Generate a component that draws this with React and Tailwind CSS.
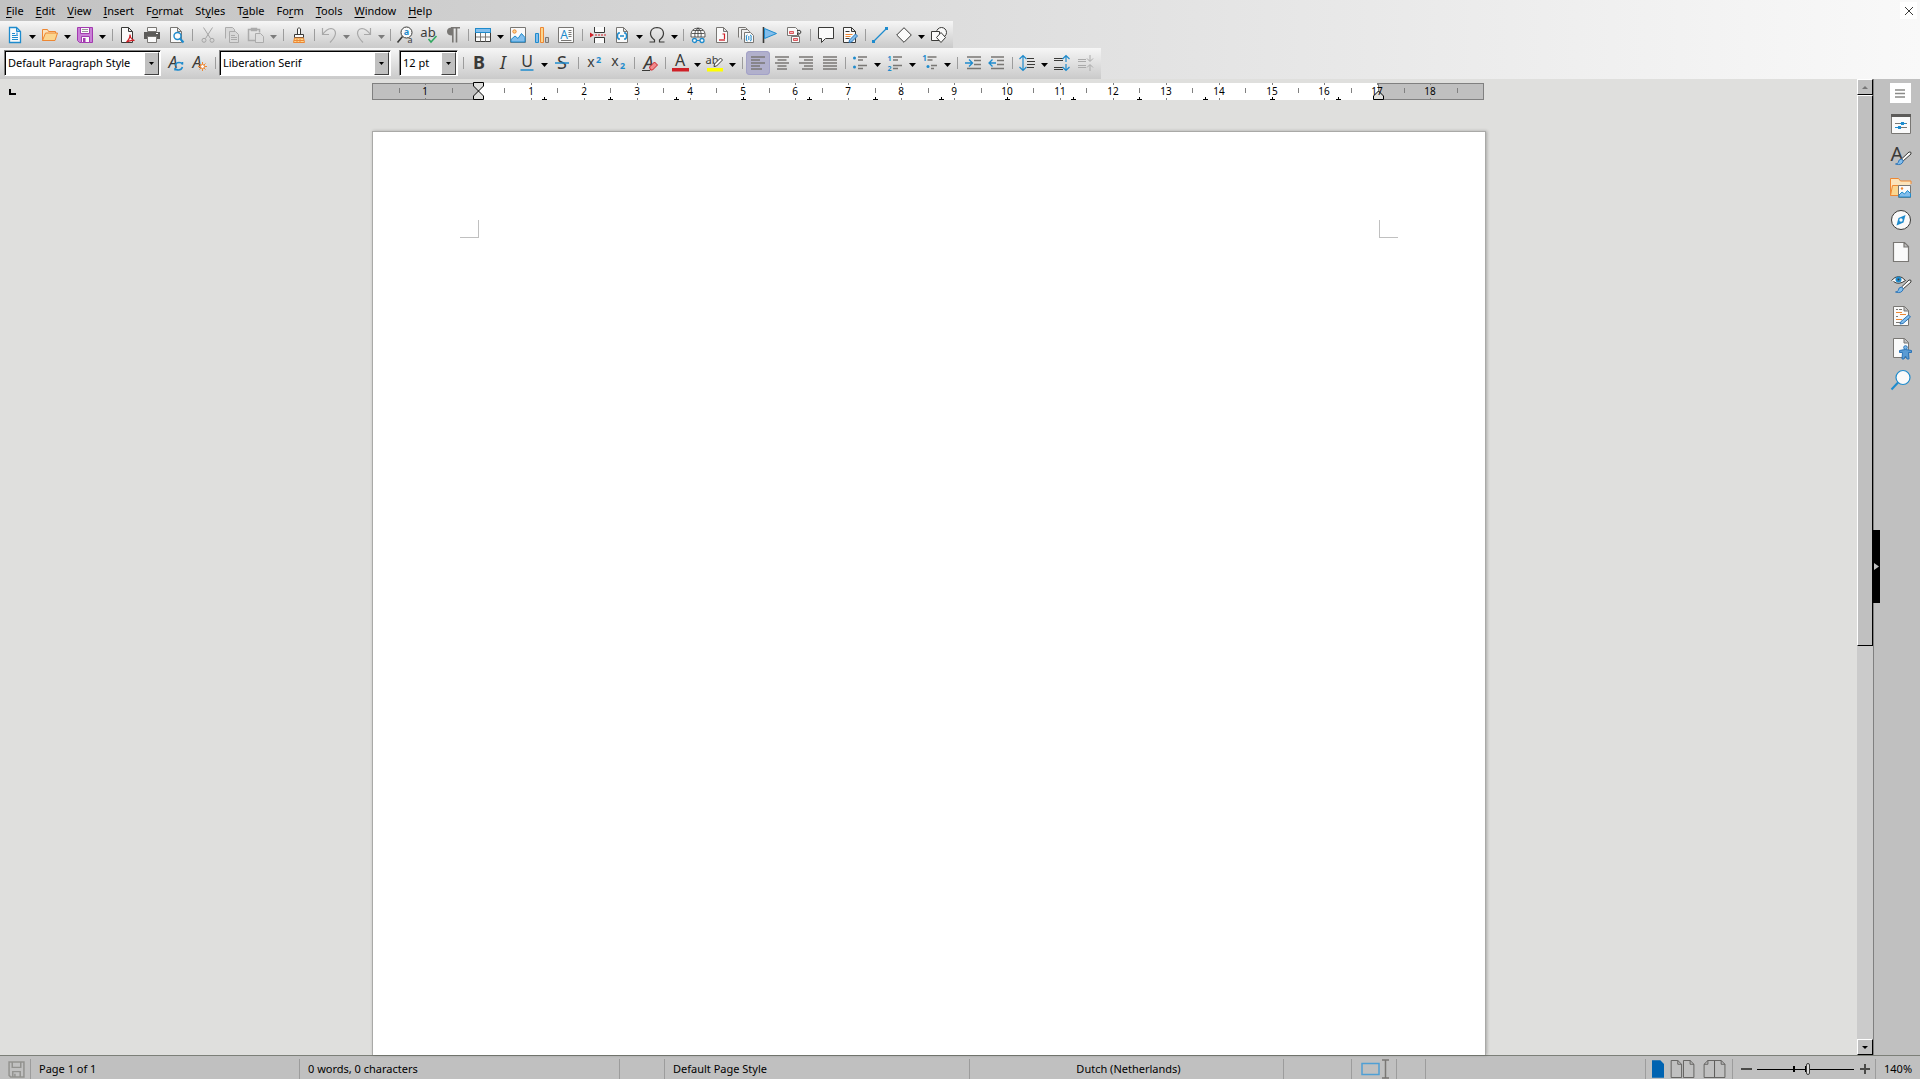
import React from 'react';

const K = '#3a3a38';
const G = '#797774';
const B = '#1e8bcd';
const L = '#83beec';
const O = '#ed8733';
const R = '#cf2027';
const W = '#fafafa';

const T = ({ x, y, s = 12, f = K, b, i, children }) => (
  <text x={x} y={y} fontSize={s} fill={f} stroke="none" fontWeight={b ? 700 : 400} fontStyle={i ? 'italic' : 'normal'} fontFamily="'Noto Sans', sans-serif" textAnchor="middle">
    {children}
  </text>
);

const page = (c = G, fill = W) => <path d="M2.5.5h7l4 4v11h-11z M9.5.5v4h4" fill={fill} stroke={c} />;
const brush = (
  <g>
    <path d="M19 7l-7.500 7 1.800 1.800L21 9q.6-2.600-2-2z" fill={W} stroke={K} />
    <path d="M11.500 14q-3 .2-3.200 3.500-1 1.500-2.800 1.500 6.500 2 7.800-3.200z" fill={L} stroke="#2b74b8" />
  </g>
);

const icons = {
  newdoc: <g><path d="M2.500.500h7l4 4v11h-11z" fill={W} stroke={B} strokeWidth="1.300" /><path d="M9.500.500v4h4z" fill={L} stroke={B} /><path d="M5 6.500h3M5 8.500h6M5 10.500h6M5 12.500h6" stroke={B} /><path d="M9 5.500h2v3h-2z" fill={L} /></g>,
  open: <g><path d="M.5 13.500v-11h5l1 2h7v2" fill="#fbe3ba" stroke={O} /><path d="M.5 13.500l3-7.500h12l-2.500 7.500z" fill="#fbd68f" stroke={O} /></g>,
  save: <g><path d="M.5.500h15v15h-13l-2-2z" fill="#c980d6" stroke="#a33ab0" /><path d="M3.500.500h9v6h-9z" fill={W} stroke="#a33ab0" /><path d="M5 2.500h6M5 4.500h6" stroke="#999" /><path d="M4.500 9.500h8v6h-8z" fill={W} stroke="#a33ab0" /><path d="M6 11h2.500v4h-2.500z" fill="#a33ab0" /></g>,
  pdf: <g><path d="M1.500.500h7l4 4v11h-11z M8.500.500v4h4" fill={W} stroke={K} /><path d="M6.500 15q3.500-3 3.500-7.500.500 5 4.500 6-4-.5-8 1.500z" fill="none" stroke={R} strokeWidth="1.200" /></g>,
  print: <g><path d="M3.500.500h9v4h-9z" fill={W} stroke={G} /><path d="M0 5h16v7h-16z" fill="#5c5b59" /><path d="M12 6.500h2" stroke="#fff" /><path d="M3.500 9.500h9v6h-9z" fill={W} stroke={G} /></g>,
  preview: <g>{page()}<circle cx="9.500" cy="9" r="3.500" fill={W} stroke={B} strokeWidth="1.400" /><path d="M12 11.500l3.500 4" stroke={B} strokeWidth="2" /></g>,
  cut: <g fill="none" stroke="#a5a5a5"><path d="M3.500.500l7 11M12.500.500l-7 11" /><circle cx="4" cy="13.300" r="2" /><circle cx="12" cy="13.300" r="2" /></g>,
  copy: <g fill="#d8d8d8" stroke="#ababab"><path d="M1.500 11.500v-11h7l2 2v2" /><path d="M5.500 4.500h6l3 3v8h-9z M7 8.500h4M7 10.500h6M7 12.500h6" /></g>,
  paste: <g fill="none" stroke="#ababab"><path d="M7 13.500h-6.500v-11h11v3M3.500 1.500h5v2h-5z" strokeWidth="1.500" /><path d="M7.500 6.500h5l3 3v6h-8z" fill="#ddd" /></g>,
  clone: <g><path d="M6.500 7v-5q1.500-3 3 0v5" fill={W} stroke={K} /><path d="M3.500 7.500h9v3h-9z" fill={W} stroke={K} /><path d="M3.500 11l-1 4.500h11l-1-4.500z" fill="#fbd68f" stroke={O} /><path d="M6 12v3M9 12v3M3 13.500h10" stroke={O} /></g>,
  undo: <g fill="none" stroke="#a8a8a8"><path d="M1.500 1v6.500h6.500M1.500 7.500q4-5.500 8.500-6 4.500.5 4.500 5-.5 4-5.500 9" strokeWidth="1.200" /></g>,
  redo: <g fill="none" stroke="#a8a8a8"><path d="M14.500 1v6.500h-6.500M14.500 7.500q-4-5.500-8.500-6-4.500.5-4.500 5 .5 4 5.500 9" strokeWidth="1.200" /></g>,
  find: <g><circle cx="9.500" cy="5.500" r="5.500" fill={W} stroke={K} /><path d="M5.500 9.500l-5 6" stroke={K} strokeWidth="1.600" /><T x="9.500" y="8" s="9" f={B} b>a</T><T x="13" y="16" s="9">a</T></g>,
  spell: <g><T x="7" y="9.500" s="13">ab</T><path d="M7.500 12l2.500 3 5.500-6" fill="none" stroke="#2fa860" strokeWidth="1.500" /></g>,
  pilcrow: <g><path d="M7 .5q-5 0-5 4t5 4z" fill={G} /><path d="M6 .8h9M7.800.500v15M11.500.500v15" stroke={G} strokeWidth="1.600" /></g>,
  table: <g><path d="M.5 1.500h15v13h-15z" fill={W} stroke={K} /><path d="M.5 1.500h15v4h-15z" fill={L} stroke={B} /><path d="M5.500 6v8.500M10.500 6v8.500M1 10h14" stroke={G} /></g>,
  image: <g><path d="M.5.500h15v15h-15z" fill={W} stroke={G} /><circle cx="4.500" cy="4.500" r="1.700" fill="#fbd68f" stroke={O} /><path d="M1 15v-2.500l4-3.500 3 2.500 3.500-5 3.500 4v4.500z" fill={L} stroke={B} /></g>,
  chart: <g><path d="M1.500 6.500h3v9h-3z" fill={L} stroke={B} /><path d="M6.500.500h3v15h-3z" fill="#fbd68f" stroke={O} /><path d="M11.500 10.500h3v5h-3z" fill="#c9c7c5" stroke={G} /></g>,
  textbox: <g><path d="M.5.500h15v15h-15z" fill={W} stroke={G} /><T x="6" y="12" s="12" f={B}>A</T><path d="M10.500 3.500h3M10.500 5.500h3M10.500 7.500h3M10.500 9.500h3M3 13.500h10.500" stroke={G} /></g>,
  pagebreak: <g><path d="M4.500 0v5.500h10v-5.500M4.500 16v-5.500h10v5.500" fill={W} stroke={K} /><path d="M0 5.500l4 2.500-4 2.500z" fill={R} /><path d="M5 8h11" stroke={R} strokeDasharray="2 1" /></g>,
  field: <g>{page()}<path d="M6 12h-1.500l-1-1.500v-3l1-1.500h1.500M10 6h1.500l1 1.500v3l-1 1.500h-1.500M6 9h4" fill="none" stroke={B} strokeWidth="1.500" /></g>,
  omega: <path d="M.5 15h5v-2q-4-3-4-6.500 0-5.500 6.500-6 6.500.5 6.500 6 0 3.500-4 6.500v2h5" fill="none" stroke={K} strokeWidth="1.200" />,
  link: <g fill="none"><path d="M1 10q-1-8.500 7-9 8 .5 7 9z" fill={W} stroke={K} strokeWidth=".8" /><path d="M1.500 6.500h13M3 3.500h10M8 1v9M5 10q-1-6 3-9 4 3 3 9" stroke={K} strokeWidth=".8" /><circle cx="4.500" cy="13.500" r="2" stroke={B} strokeWidth="1.300" fill={W} /><circle cx="12" cy="13.500" r="2" stroke={B} strokeWidth="1.300" fill={W} /><path d="M6.500 13.500h3.500" stroke={B} /></g>,
  footnote: <g>{page()}<path d="M5 13h6" stroke={R} strokeWidth="1.300" /><path d="M8.500 7h2v5" fill="none" stroke={R} strokeWidth="1.200" /></g>,
  endnote: <g><path d="M.5 10.500v-10h7l2 2M3.500 12.500v-10h6l2 2v2" fill="#eee" stroke={G} /><path d="M6.500 5.500h6l3 3v7h-9z" fill={W} stroke={G} /><path d="M9.500 8q-2 0-1 3-1 3 1 3M12 8q2 0 1 3 1 3-1 3M10.800 9v4" fill="none" stroke={B} /></g>,
  bookmark: <g><path d="M1.500 0v16" stroke={K} strokeWidth="1.600" /><path d="M2.500 1.500l12 5-12 5z" fill={L} stroke={B} /></g>,
  crossref: <g fill={W}><path d="M1.500.500h8l2 2v6h-10z" stroke={G} /><path d="M3.500 4.500h4v2h-4z" fill="#f5b8ba" stroke={R} strokeWidth=".7" /><path d="M5.500 9.500h8v6h-8z" stroke={G} /><path d="M7.500 11.500h4v2h-4z" fill="#f5b8ba" stroke={R} strokeWidth=".7" /><path d="M11 3.500q4-1 4 1.500t-4 2l1.500-1.500M11 7l2 1.500" fill="none" stroke={K} /></g>,
  comment: <path d="M.5.500h15v11h-8l-4 4v-4h-3z" fill={W} stroke={K} />,
  track: <g><path d="M1.500.500h8l4 4v11h-12z M9.500.500v4h4" fill={W} stroke={K} /><path d="M3.500 4.500h4M3.500 11.500h4" stroke={K} /><path d="M3.500 7.500h7M3.500 9.500h5" stroke={O} /><path d="M7.500 13l6-6 2 2-6 6-2.500.5z" fill={L} stroke="#2b74b8" /></g>,
  line: <g><path d="M1.500 14.500l13-13" stroke={B} strokeWidth="1.300" /><path d="M0 13h3v3h-3zM13 0h3v3h-3z" fill={B} /></g>,
  diamond: <path d="M8 .7l7.300 7.300-7.300 7.300-7.300-7.300z" fill={W} stroke={K} />,
  shapes: <g fill={W} stroke={K}><circle cx="10.500" cy="5.500" r="5" /><path d="M.5 4.500h8v9h-8z" /><path d="M10 5.500l4.500 5-4.500 5-4.500-5z" /></g>,
  styleUpd: <g><T x="6" y="12.500" s="16" i>A</T><path d="M8 10.500q1-3 4-3t3.500 2v-2.500M15.500 12q-1 3-4 3t-3.500-2v2.500" fill="none" stroke={B} strokeWidth="1.500" /></g>,
  styleNew: <g><T x="6" y="12.500" s="16" i>A</T><path d="M11.500 7v9M7 11.500h9M8.500 8.500l6 6M14.500 8.500l-6 6" stroke={O} /><circle cx="11.500" cy="11.500" r="2" fill={W} stroke={O} /></g>,
  bold: <T x="8" y="14" s="18" b>B</T>,
  italic: <T x="8" y="14" s="18" i>I</T>,
  underline: <g><T x="8" y="12" s="16">U</T><path d="M1.500 15h13" stroke={B} strokeWidth="1.500" /></g>,
  strike: <g><T x="8" y="14" s="18">S</T><path d="M1 8h14" stroke={B} strokeWidth="1.500" /></g>,
  sup: <g><T x="5" y="12" s="14">x</T><T x="12.500" y="8" s="9" f={B} b>2</T></g>,
  sub: <g><T x="5" y="11" s="14">x</T><T x="12.500" y="14" s="9" f={B} b>2</T></g>,
  clear: <g><T x="6.500" y="14" s="18" i>A</T><path d="M0 15.500h8" stroke={K} /><path d="M7.500 12l5-5 3 3-5 5h-2z" fill="#f08a8c" stroke={R} /></g>,
  color: <g><T x="8" y="11" s="16">A</T><path d="M0 13h17v3.500h-17z" fill={R} /></g>,
  highlight: <g><T x="5" y="8.500" s="11">ab</T><path d="M7.500 9l6-6 2 2-6 6-2.500.5z" fill={W} stroke={K} /><path d="M0 13h16v3.500h-16z" fill="#ff0" /></g>,
  left: <path d="M1 2h14M1 5h9M1 8h14M1 11h9M1 14h11" stroke={G} strokeWidth="1.700" />,
  center: <path d="M1 2h14M3.500 5h9M1 8h14M3.500 11h9M3 14h10" stroke={G} strokeWidth="1.700" />,
  right: <path d="M1 2h14M6 5h9M1 8h14M6 11h9M4 14h11" stroke={G} strokeWidth="1.700" />,
  justify: <path d="M1 2h14M1 5h14M1 8h14M1 11h14M1 14h14" stroke={G} strokeWidth="1.700" />,
  bullets: <g><circle cx="2.500" cy="3" r="1.500" fill={B} /><circle cx="2.500" cy="12" r="1.500" fill={B} /><path d="M6 2h9M6 5h5M6 10.500h9M6 13.500h5" stroke={G} strokeWidth="1.500" /></g>,
  numbers: <g><T x="2.500" y="5.500" s="7" f={B} b>1</T><T x="2.500" y="15.500" s="7" f={B} b>2</T><path d="M6 2h9M6 5h5M6 10.500h9M6 13.500h5" stroke={G} strokeWidth="1.500" /></g>,
  outline: <g><T x="2.500" y="6" s="8" f={B} b>1</T><path d="M5.500 2h9M5.500 5h5M9 10.500h6M9 13.500h3" stroke={G} strokeWidth="1.500" /><circle cx="6" cy="11.500" r="1.500" fill={B} /></g>,
  indent: <g><path d="M2 2h14M9 5.500h7M9 9.500h7M2 13.500h14" stroke={G} strokeWidth="1.600" /><path d="M0 8h7M4 4.500l3.500 3.500-3.500 3.500" fill="none" stroke={B} strokeWidth="1.300" /></g>,
  outdent: <g><path d="M2 2h13M8 5.500h7M8 9.500h7M2 13.500h13" stroke={G} strokeWidth="1.600" /><path d="M7 8h-7M3.500 4.500l-3.500 3.500 3.500 3.500" fill="none" stroke={B} strokeWidth="1.300" /></g>,
  spacing: <g><path d="M8 3.500h7M8 6.500h8M8 9.500h8M8 12.500h7" stroke={K} strokeWidth="1.200" /><path d="M4 1v14M.5 4l3.500-3.500 3.500 3.500M.5 12l3.500 3.500 3.500-3.500" fill="none" stroke={B} strokeWidth="1.200" /></g>,
  paraInc: <g><path d="M0 3.500h9M0 5.500h9M0 12.500h9M0 14.500h9" stroke={K} /><path d="M12 1v6M8.500 4l3.500-3.500 3.500 3.500M12 9v6M8.500 12l3.500 3.500 3.500-3.500" fill="none" stroke={B} strokeWidth="1.200" /></g>,
  paraDec: <g stroke="#aaa" fill="none"><path d="M0 4.500h8M0 6.500h8M0 10.500h8M0 12.500h8" /><path d="M12 0v6M9 3.500l3 3 3-3M12 16v-6M9 12.500l3-3 3 3" /></g>,
};

const side = {
  properties: <g><path d="M1.500 1.500h19v19h-19z" fill={W} stroke={G} /><path d="M1 1h20v3h-20z" fill="#5c5b59" /><path d="M5 10.500h12M5 14.500h12" stroke={G} /><path d="M11 9h3v3h-3zM8 13h3v3h-3z" fill={B} /><path d="M10 10.500h6M5 14.500h6" stroke={B} /></g>,
  styles: <g><T x="7" y="15.500" s="20">A</T>{brush}</g>,
  gallery: <g><path d="M.5 18.500v-17h8l2 2.500h10.500v3" fill="#fbe3ba" stroke={O} /><path d="M.5 18.500l2-10h6v10z" fill="#fbd68f" stroke={O} /><path d="M8.500 8.500h12v12h-12z" fill={W} stroke={G} /><circle cx="12" cy="11.500" r="1.200" fill={O} /><path d="M9 20v-2l3-3 2.500 2 3-3.500 3 3v3.500z" fill={L} stroke={B} /></g>,
  navigator: <g><circle cx="11" cy="11" r="9.500" fill={W} stroke={K} /><path d="M15.500 6l-2 7.500-7 3 2-7.500z" fill={B} /><circle cx="11" cy="11" r="1.700" fill={W} /></g>,
  page: <path d="M3.500 1.500h11l4 4v15h-15z M14 1.500v4.500h4.500" fill={W} stroke={G} strokeWidth="1.200" />,
  inspector: <g><path d="M1.500 7.500q7-8 14 0-7 5-12 1" fill={W} stroke={K} /><circle cx="8.500" cy="6.500" r="3" fill={B} /><circle cx="8.500" cy="6.500" r="1" fill={K} />{brush}</g>,
  changes: <g><path d="M3.500 1.500h11l4 4v15h-15z M14 1.500v4.500h4.500" fill={W} stroke={G} /><path d="M6 4.500h2M9 4.500h3M6 11.500h2M6 17.500h5" stroke={G} /><path d="M6 7.500h6M10 9.500h6M6 14.500h6" stroke={O} /><path d="M10 19l1-2.500 7.500-6.500 2 2-7.500 6.500z" fill={L} stroke="#2b74b8" /></g>,
  access: <g><path d="M3.500 1.500h11l4 4v15h-15z M14 1.500v4.500h4.500" fill={W} stroke={G} /><circle cx="15.500" cy="10.500" r="1.800" fill={L} stroke="#2b74b8" /><path d="M9.500 13.500q6-2 12 0v2h-3l.5 6.500h-2l-1.500-3-1.500 3h-2l.5-6.500h-3z" fill="#5a9bd4" stroke="#2b74b8" /></g>,
  search: <g><circle cx="13" cy="8.500" r="7" fill={W} stroke={B} strokeWidth="1.200" /><path d="M8 13.500l-6.500 7" stroke={B} strokeWidth="2" /></g>,
};

function IconButton({ name, label, active }) {
  return (
    <button aria-label={label || name} className={`flex h-6 w-6 shrink-0 items-center justify-center rounded-sm ${active ? 'bg-[#b1b0cc] ring-1 ring-inset ring-[#a3a2c8]' : ''}`}>
      <svg viewBox="0 0 16 16" className="h-4 w-4 overflow-visible" fill="none">{icons[name]}</svg>
    </button>
  );
}

function Arrow({ off, label }) {
  return (
    <button aria-label={label} className="flex h-6 w-[11px] shrink-0 items-center justify-center pt-1">
      <svg viewBox="0 0 7 4" className="h-1 w-[7px]"><path d="M0 0h7l-3.500 4z" fill={off ? '#7c7c7c' : '#000'} /></svg>
    </button>
  );
}

const Sep = ({ narrow }) => (
  <span className={`flex shrink-0 justify-center ${narrow ? 'w-1.5' : 'w-2'}`}><span className="h-3 w-px bg-[#9c9c9c]" /></span>
);

function Tools({ items }) {
  return items.map((t, i) => {
    if (t === '|') return <Sep key={i} />;
    if (t === '!') return <Sep key={i} narrow />;
    if (t === 'v') return <Arrow key={i} label={`${items[i - 1]} options`} />;
    if (t === 'x') return <Arrow key={i} off label={`${items[i - 1]} options`} />;
    return <IconButton key={i} name={t} active={t === 'left'} />;
  });
}

function Combo({ label, value, width }) {
  return (
    <div className={`flex h-[26px] shrink-0 border border-t-[#808080] border-l-[#808080] border-r-white border-b-white ${width}`}>
      <div className="flex min-w-0 flex-1 border-t border-l border-black bg-white pr-px">
        <input aria-label={label} defaultValue={value} className="min-w-0 flex-1 bg-transparent pl-0.5 text-[11px] outline-none" />
        <button aria-label={`${label} list`} className="flex w-[15px] items-center justify-center border border-t-white border-l-white border-r-[#404040] border-b-[#404040] bg-[#c0c0c0]">
          <svg viewBox="0 0 5 3" className="h-[3px] w-[5px]"><path d="M0 0h5l-2.500 3z" /></svg>
        </button>
      </div>
    </div>
  );
}

const menus = [['', 'F', 'ile'], ['', 'E', 'dit'], ['', 'V', 'iew'], ['', 'I', 'nsert'], ['F', 'o', 'rmat'], ['St', 'y', 'les'], ['T', 'a', 'ble'], ['Fo', 'r', 'm'], ['', 'T', 'ools'], ['', 'W', 'indow'], ['', 'H', 'elp']];

const row1 = ['newdoc', 'v', 'open', 'v', 'save', 'v', '|', 'pdf', 'print', 'preview', '|', 'cut', 'copy', 'paste', 'x', '|', 'clone', '!', 'undo', 'x', 'redo', 'x', '!', 'find', 'spell', 'pilcrow', '!', 'table', 'v', 'image', 'chart', 'textbox', '|', 'pagebreak', 'field', 'v', 'omega', 'v', '!', 'link', 'footnote', 'endnote', 'bookmark', 'crossref', '|', 'comment', 'track', '!', 'line', 'diamond', 'v', 'shapes'];
const row2 = ['|', 'bold', 'italic', 'underline', 'v', 'strike', '|', 'sup', 'sub', '|', 'clear', '!', 'color', 'v', 'highlight', 'v', '|', 'left', 'center', 'right', 'justify', '!', 'bullets', 'v', 'numbers', 'v', 'outline', 'v', '|', 'indent', 'outdent', '!', 'spacing', 'v', 'paraInc', 'paraDec'];

function Ruler() {
  const zero = 106;
  const at = (cm) => zero + Math.round(cm * 52.9);
  const nums = Array.from({ length: 20 }, (_, i) => i - 1);
  return (
    <svg width="1113" height="18" className="mx-auto mt-1 block shrink-0 overflow-visible" shapeRendering="crispEdges">
      <rect x="106" width="901" height="17" fill="#fff" />
      <rect x=".5" y=".5" width="106" height="16" fill="#c0c0c0" stroke="#808080" />
      <rect x="1006.500" y=".5" width="105" height="16" fill="#c0c0c0" stroke="#808080" />
      <path d={`M${at(-1.5) + 0.5} 5v5`} stroke="#808080" />
      {nums.map((n) => (
        <g key={n} stroke="#808080">
          <path d={`M${at(n + 0.5) + 0.5} 5v5`} />
          {n !== 0 && n < 19 && <path d={`M${at(n) + 0.5} 0v2M${at(n) + 0.5} 15v2`} />}
        </g>
      ))}
      {Array.from({ length: 13 }, (_, i) => at((i + 1) * 1.25)).map((x) => (
        <path key={x} d={`M${x - 2} 16.500h5M${x + 0.5} 14v3`} stroke="#000" />
      ))}
      <g fill="#dfdfdd" stroke="#000" shapeRendering="auto">
        <path d="M101.500-.5h10v3.500l-5 5-5-5z" />
        <path d="M106.500 8l5 5v3.500h-10v-3.500z" />
        <path d="M1006.500 8l5 5v3.500h-10v-3.500z" />
      </g>
      {nums.filter((n) => n !== 0 && n < 19).map((n) => (
        <text key={n} x={at(n)} y="12" fontSize="10" textAnchor="middle" fontFamily="'Noto Sans', sans-serif">{Math.abs(n)}</text>
      ))}
    </svg>
  );
}

function ScrollBar() {
  const raised = 'border border-t-white border-l-white border-r-black border-b-black';
  return (
    <div className="flex w-4 shrink-0 flex-col bg-[#cbcbcb]">
      <button aria-label="Scroll up" className={`flex h-4 items-center justify-center bg-[#c0c0c0] ${raised}`}>
        <svg viewBox="0 0 6 3" className="h-[3px] w-1.5"><path d="M0 3h6l-3-3z" fill="#777" /></svg>
      </button>
      <div className={`basis-[551px] bg-[#c0c0c0] ${raised}`} />
      <div className="flex-1" />
      <button aria-label="Scroll down" className={`flex h-4 items-center justify-center bg-[#c0c0c0] ${raised}`}>
        <svg viewBox="0 0 6 3" className="h-[3px] w-1.5"><path d="M0 0h6l-3 3z" /></svg>
      </button>
    </div>
  );
}

function SideBar() {
  return (
    <aside className="relative flex w-[47px] shrink-0 flex-col items-center border-l border-[#808080] bg-[#c0c0c0] pt-1 pl-1.5">
      <button aria-label="Sidebar settings" className="mb-2.5 flex h-5 w-[21px] items-center justify-center bg-white">
        <svg viewBox="0 0 10 9" className="h-[9px] w-2.5"><path d="M0 1h10M0 4.500h10M0 8h10" stroke="#8a8a88" strokeWidth="1.500" /></svg>
      </button>
      <div className="flex flex-col gap-2.5 pl-px">
        {Object.keys(side).map((k) => (
          <button key={k} aria-label={k} className="h-[22px] w-[22px]">
            <svg viewBox="0 0 22 22" className="h-full w-full overflow-visible" fill="none">{side[k]}</svg>
          </button>
        ))}
      </div>
      <button aria-label="Hide sidebar" className="absolute top-[451px] -left-px flex h-[73px] w-[7px] items-center justify-center bg-black">
        <svg viewBox="0 0 5 7" className="h-[7px] w-[5px]"><path d="M0 0l5 3.500-5 3.500z" fill="#c0c0c0" /></svg>
      </button>
    </aside>
  );
}

function Cell({ children, className = 'pl-2' }) {
  return (
    <div className={`flex min-w-0 items-center border-r border-[#9c9c9c] whitespace-nowrap last:border-r-0 ${className}`}>{children}</div>
  );
}

function StatusBar() {
  return (
    <footer className="grid h-6 shrink-0 grid-cols-[31px_269fr_320fr_45px_305fr_314fr_68px_45px_29px_220fr_87px_143px_44px] border-t border-[#7c7f78] bg-[#c0c0c0] py-[3px] text-[11px]">
      <Cell>
        <svg viewBox="0 0 16 16" className="h-[17px] w-[17px] shrink-0" fill="none" stroke="#92928f"><path d="M1 1h14v14h-12.500l-1.500-1.500zM4 1v5h8v-5M4.500 15v-5h7v5M6.500 12v3" strokeWidth="1.400" /></svg>
      </Cell>
      <Cell>Page 1 of 1</Cell>
      <Cell>0 words, 0 characters</Cell>
      <Cell />
      <Cell>Default Page Style</Cell>
      <Cell className="justify-center pl-1">Dutch (Netherlands)</Cell>
      <Cell />
      <Cell>
        <svg viewBox="0 0 30 20" className="h-5 w-[30px] shrink-0" fill="none"><path d="M2 4.500h17v11h-17z" stroke="#4f9fd4" strokeWidth="1.500" /><path d="M22 1h7M22 19h7M25.500 1v18" stroke={G} strokeWidth="1.500" /></svg>
      </Cell>
      <Cell />
      <Cell />
      <Cell className="gap-1.5 pl-1.5">
        <button aria-label="Single page"><svg viewBox="0 0 13 19" className="block h-[18px] w-3"><path d="M0 0h9l4 4v15h-13z" fill="#0063b1" /></svg></button>
        <button aria-label="Multiple pages"><svg viewBox="0 0 26 19" className="block h-[18px] w-[26px]" fill="none" stroke="#5f5e5c"><path d="M.5.500h7l4 4v14h-11zM7.500.500v4h4M13.500.500h7l4 4v14h-11zM20.500.500v4h4" /></svg></button>
        <button aria-label="Book view"><svg viewBox="0 0 26 19" className="block h-[18px] w-[26px]" fill="none" stroke="#5f5e5c"><path d="M12.500.500h-7l-4 4v14h11zM5.500.500v4h-4M12.500.500h7l4 4v14h-11zM19.500.500v4h4" /></svg></button>
      </Cell>
      <Cell>
        <button aria-label="Zoom out" className="flex h-4 w-[11px] items-center"><span className="h-0.5 w-full bg-[#4a4a48]" /></button>
        <span className="relative ml-[5px] flex h-4 w-[97px] items-center">
          <svg viewBox="0 0 97 16" className="absolute inset-0 h-4 w-[97px]" shapeRendering="crispEdges"><path d="M0 8h97v1h-97zM36 5h2v6h-2zM48 5h2v6h-2z" /></svg>
          <input type="range" aria-label="Zoom" min="20" max="250" defaultValue="141" className="relative h-4 w-full appearance-none bg-transparent [&::-webkit-slider-thumb]:h-3 [&::-webkit-slider-thumb]:w-1 [&::-webkit-slider-thumb]:appearance-none [&::-webkit-slider-thumb]:rounded-xs [&::-webkit-slider-thumb]:border [&::-webkit-slider-thumb]:border-[#3a3a38] [&::-webkit-slider-thumb]:bg-[#dcdcdc]" />
        </span>
        <button aria-label="Zoom in" className="ml-1.5 flex h-4 w-2.5 items-center"><svg viewBox="0 0 10 10" className="h-2.5 w-2.5"><path d="M0 5h10M5 0v10" stroke="#4a4a48" strokeWidth="2" /></svg></button>
      </Cell>
      <Cell>140%</Cell>
    </footer>
  );
}

export default function App() {
  return (
    <div className="flex h-screen flex-col overflow-hidden bg-[#dfdfdd] font-['Noto_Sans',sans-serif] text-[11px] text-black">
      <header className="shrink-0 bg-linear-to-r from-[#c2c2c2] to-[#f9f9f9]">
        <div className="flex h-[21px] justify-between">
          <nav className="flex">
            {menus.map(([a, k, b]) => (
              <button key={a + k + b} className="flex px-1.5 leading-[22px]">
                <span>{a}<span className="underline underline-offset-2">{k}</span>{b}</span>
              </button>
            ))}
          </nav>
          <button aria-label="Close document" className="mt-0.5 mr-[3px] flex h-[17px] w-[17px] items-center justify-center bg-white">
            <svg viewBox="0 0 8 8" className="h-2 w-2"><path d="M0 0l8 8M8 0l-8 8" stroke={K} /></svg>
          </button>
        </div>
        <div className="flex h-[27px] w-fit items-center bg-linear-to-b from-[#f6f6f6] to-[#cacaca] pr-0.5 pl-[3px]">
          <Tools items={row1} />
        </div>
        <div className="flex h-[31px] w-fit items-center bg-linear-to-b from-[#f6f6f6] to-[#cacaca] pr-[3px] pb-px pl-1">
          <Combo label="Paragraph style" value="Default Paragraph Style" width="w-[157px]" />
          <span className="ml-0.5 flex items-center"><Tools items={['styleUpd', 'styleNew']} /></span>
          <Sep />
          <Combo label="Font name" value="Liberation Serif" width="w-[172px]" />
          <span className="w-2" />
          <Combo label="Font size" value="12 pt" width="w-[59px]" />
          <span className="w-px" />
          <Tools items={row2} />
        </div>
      </header>
      <main className="flex min-h-0 flex-1">
        <div className="relative flex min-w-0 flex-1 flex-col">
          <Ruler />
          <svg viewBox="0 0 7 6" className="absolute top-2.5 left-[9px] h-1.5 w-[7px]" shapeRendering="crispEdges"><path d="M0 0h2v4h5v2h-7z" /></svg>
          <section aria-label="Document page" className="mx-auto mt-[30px] flex w-[1114px] flex-1 items-start justify-between border border-b-0 border-[#a9a9a7] bg-white px-[87px] pt-[88px] shadow-[1px_0_3px_rgba(0,0,0,0.25)]">
            <span className="h-[18px] w-[19px] border-r border-b border-[#c0c0c0]" />
            <span className="h-[18px] w-[19px] border-b border-l border-[#c0c0c0]" />
          </section>
        </div>
        <ScrollBar />
        <SideBar />
      </main>
      <StatusBar />
    </div>
  );
}
